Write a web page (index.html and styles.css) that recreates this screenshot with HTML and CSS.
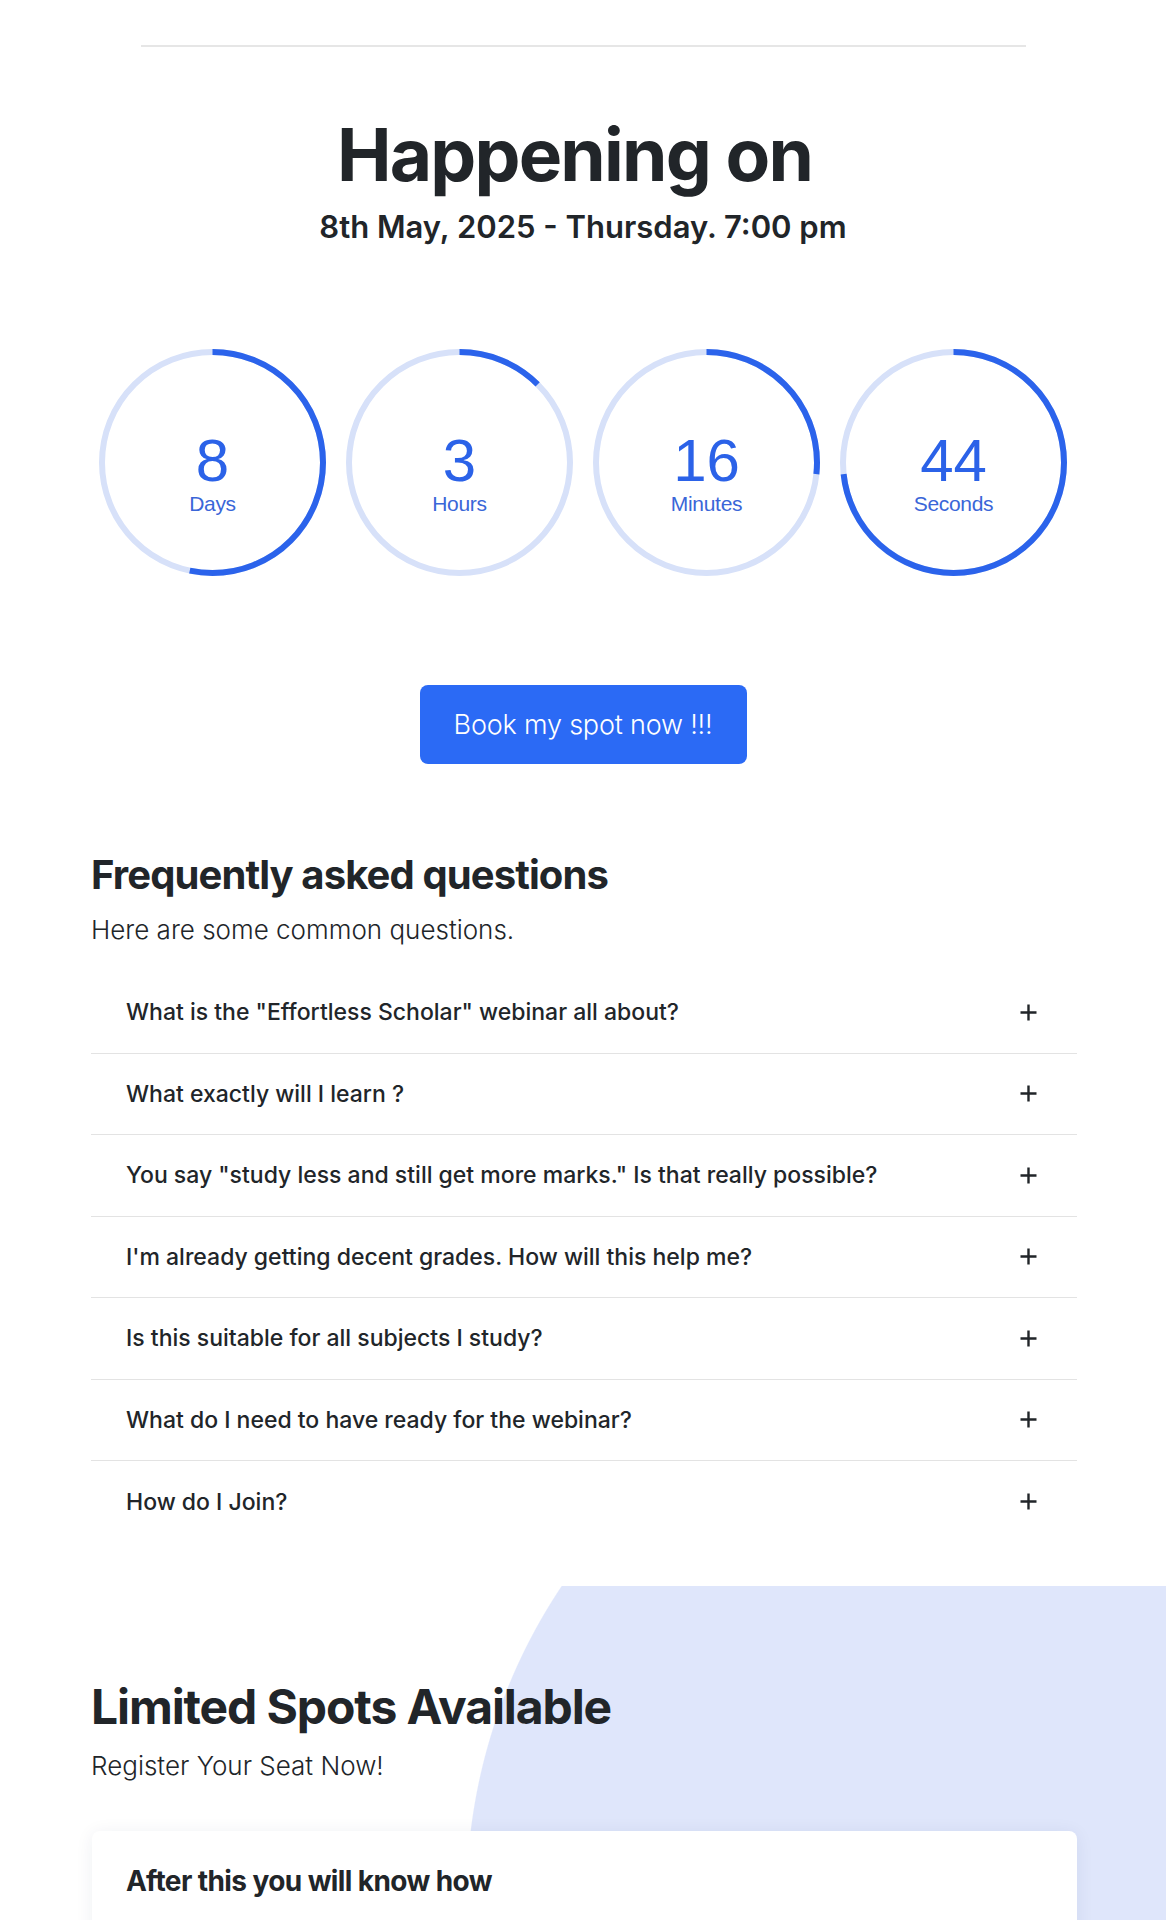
FILE: index.html
```html
<!DOCTYPE html>
<html lang="en">
<head>
<meta charset="utf-8">
<title>Happening on</title>
<link rel="stylesheet" href="styles.css">
</head>
<body>
<main class="page">
  <section class="event">
    <hr class="divider">
    <h1 class="event-title">Happening on</h1>
    <p class="event-date">8th May, 2025 - Thursday. 7:00 pm</p>

    <div class="countdown">
      <div class="timer">
        <svg class="ring" viewBox="0 0 227 227" width="227" height="227">
          <circle class="track" cx="113.5" cy="113.5" r="110.5"/>
          <circle class="arc" cx="113.5" cy="113.5" r="110.5" pathLength="100" style="stroke-dasharray: 53.3 100"/>
        </svg>
        <div class="timer-text"><span class="num">8</span><span class="unit">Days</span></div>
      </div>
      <div class="timer">
        <svg class="ring" viewBox="0 0 227 227" width="227" height="227">
          <circle class="track" cx="113.5" cy="113.5" r="110.5"/>
          <circle class="arc" cx="113.5" cy="113.5" r="110.5" pathLength="100" style="stroke-dasharray: 12.5 100"/>
        </svg>
        <div class="timer-text"><span class="num">3</span><span class="unit">Hours</span></div>
      </div>
      <div class="timer">
        <svg class="ring" viewBox="0 0 227 227" width="227" height="227">
          <circle class="track" cx="113.5" cy="113.5" r="110.5"/>
          <circle class="arc" cx="113.5" cy="113.5" r="110.5" pathLength="100" style="stroke-dasharray: 26.7 100"/>
        </svg>
        <div class="timer-text"><span class="num">16</span><span class="unit">Minutes</span></div>
      </div>
      <div class="timer">
        <svg class="ring" viewBox="0 0 227 227" width="227" height="227">
          <circle class="track" cx="113.5" cy="113.5" r="110.5"/>
          <circle class="arc" cx="113.5" cy="113.5" r="110.5" pathLength="100" style="stroke-dasharray: 73.3 100"/>
        </svg>
        <div class="timer-text"><span class="num">44</span><span class="unit">Seconds</span></div>
      </div>
    </div>

    <a class="book-btn" href="#">Book my spot now !!!</a>
  </section>

  <section class="faq">
    <h2 class="faq-title">Frequently asked questions</h2>
    <p class="faq-sub">Here are some common questions.</p>
    <div class="faq-list">
      <div class="faq-item"><span>What is the "Effortless Scholar" webinar all about?</span><svg class="plus" viewBox="0 0 17 17" width="17" height="17"><path d="M8.5 0.5v16M0.5 8.5h16"/></svg></div>
      <div class="faq-item"><span>What exactly will I learn ?</span><svg class="plus" viewBox="0 0 17 17" width="17" height="17"><path d="M8.5 0.5v16M0.5 8.5h16"/></svg></div>
      <div class="faq-item"><span>You say "study less and still get more marks." Is that really possible?</span><svg class="plus" viewBox="0 0 17 17" width="17" height="17"><path d="M8.5 0.5v16M0.5 8.5h16"/></svg></div>
      <div class="faq-item"><span>I'm already getting decent grades. How will this help me?</span><svg class="plus" viewBox="0 0 17 17" width="17" height="17"><path d="M8.5 0.5v16M0.5 8.5h16"/></svg></div>
      <div class="faq-item"><span>Is this suitable for all subjects I study?</span><svg class="plus" viewBox="0 0 17 17" width="17" height="17"><path d="M8.5 0.5v16M0.5 8.5h16"/></svg></div>
      <div class="faq-item"><span>What do I need to have ready for the webinar?</span><svg class="plus" viewBox="0 0 17 17" width="17" height="17"><path d="M8.5 0.5v16M0.5 8.5h16"/></svg></div>
      <div class="faq-item"><span>How do I Join?</span><svg class="plus" viewBox="0 0 17 17" width="17" height="17"><path d="M8.5 0.5v16M0.5 8.5h16"/></svg></div>
    </div>
  </section>

  <section class="spots">
    <div class="spots-inner">
      <h2 class="spots-title">Limited Spots Available</h2>
      <p class="spots-sub">Register Your Seat Now!</p>
      <div class="card">
        <h3 class="card-title">After this you will know how</h3>
      </div>
    </div>
  </section>
</main>
</body>
</html>
```

FILE: styles.css
```css
* { box-sizing: border-box; }

html, body {
  margin: 0;
  padding: 0;
  background: #ffffff;
}

body {
  font-family: "Inter", "Noto Sans", "Liberation Sans", sans-serif;
  color: #212529;
}

.page {
  width: 1166px;
  overflow: hidden;
}

.event {
  display: flex;
  flex-direction: column;
  align-items: center;
  padding-top: 45px;
}

.divider {
  width: 885px;
  height: 2px;
  margin: 0;
  border: 0;
  background: #e6e6e6;
}

.event-title {
  margin: 65px 0 0;
  padding-right: 17px;
  font-size: 73px;
  line-height: 86px;
  font-weight: 700;
  letter-spacing: -1.8px;
  color: #212529;
}

.event-date {
  margin: 11px 0 0;
  font-size: 31px;
  line-height: 36px;
  font-weight: 600;
  letter-spacing: 0;
  color: #212529;
}

.countdown {
  display: flex;
  gap: 20px;
  margin-top: 104px;
}

.timer {
  display: grid;
  width: 227px;
  height: 227px;
}

.ring,
.timer-text {
  grid-area: 1 / 1;
}

.ring {
  transform: rotate(-90deg);
}

.track {
  fill: none;
  stroke: #d7e1f9;
  stroke-width: 6;
}

.arc {
  fill: none;
  stroke: #2b63eb;
  stroke-width: 6;
}

.timer-text {
  display: flex;
  flex-direction: column;
  align-items: center;
  justify-content: center;
  padding-top: 20px;
  font-family: "Liberation Sans", Arial, sans-serif;
}

.num {
  font-size: 60px;
  line-height: 60px;
  color: #2b62e8;
}

.unit {
  margin-top: 2px;
  font-size: 21px;
  line-height: 22px;
  letter-spacing: -0.3px;
  color: #3a66d8;
}

.book-btn {
  display: flex;
  align-items: center;
  justify-content: center;
  width: 327px;
  height: 79px;
  margin-top: 109px;
  border-radius: 8px;
  background: #2b6af5;
  color: #ffffff;
  text-decoration: none;
  font-size: 27px;
  font-weight: 300;
  letter-spacing: -0.2px;
}

.faq {
  width: 986px;
  margin: 87px 0 0 91px;
}

.faq-title {
  margin: 0;
  font-size: 40px;
  line-height: 48px;
  font-weight: 700;
  letter-spacing: -0.9px;
}

.faq-sub {
  margin: 13px 0 0;
  font-size: 26px;
  line-height: 36px;
  font-weight: 300;
  color: #212529;
}

.faq-list {
  margin-top: 24px;
}

.faq-item {
  display: flex;
  align-items: center;
  justify-content: space-between;
  height: 81.5px;
  padding: 0 40px 0 35px;
  border-bottom: 1.5px solid #e3e3e3;
  font-size: 23px;
  font-weight: 500;
  color: #212529;
}

.faq-item:last-child {
  border-bottom: 0;
}

.plus {
  flex: none;
  fill: none;
  stroke: #212529;
  stroke-width: 2.4;
}

.spots {
  margin-top: 43px;
  padding-top: 92px;
  padding-bottom: 80px;
  background: radial-gradient(circle 563px at 1029px 313px, #dfe6fb 99.8%, rgba(223, 230, 251, 0) 100%) no-repeat;
}

.spots-inner {
  margin-left: 91px;
  width: 986px;
}

.spots-title {
  margin: 0;
  font-size: 48px;
  line-height: 58px;
  font-weight: 700;
  letter-spacing: -1.1px;
}

.spots-sub {
  margin: 12px 0 0;
  font-size: 26px;
  line-height: 36px;
  font-weight: 300;
}

.card {
  margin-top: 47px;
  margin-left: 1px;
  width: 985px;
  min-height: 300px;
  padding: 35px 34px;
  background: #ffffff;
  border-radius: 8px;
  box-shadow: 0 2px 18px rgba(30, 40, 80, 0.07);
}

.card-title {
  margin: 0;
  font-size: 28px;
  line-height: 31px;
  font-weight: 700;
  letter-spacing: -0.6px;
}
```
